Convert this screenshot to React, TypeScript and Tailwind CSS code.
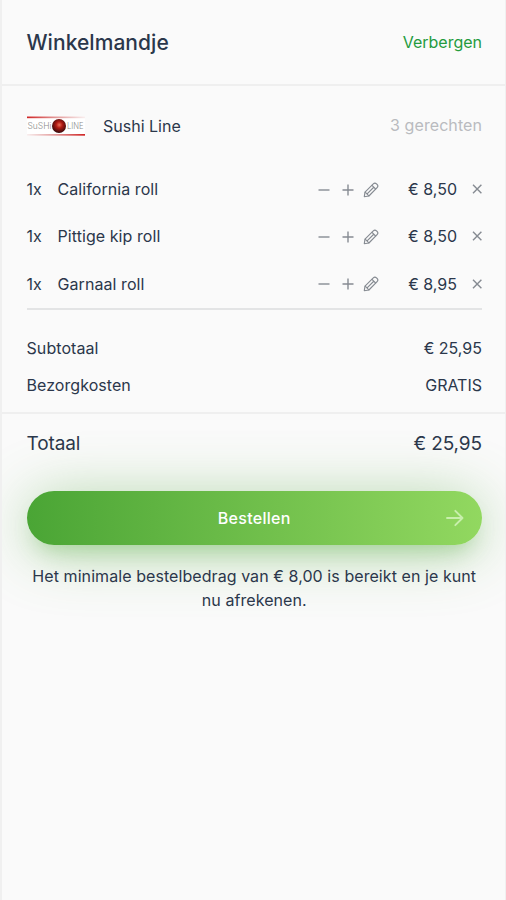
import React from "react";

const items = [
    { name: "California roll", price: "€ 8,50" },
    { name: "Pittige kip roll", price: "€ 8,50" },
    { name: "Garnaal roll", price: "€ 8,95" },
];

function PencilIcon() {
    return (
        <svg className="w-4 h-4" viewBox="0 0 16 16" fill="none" stroke="currentColor" strokeWidth="1.15" strokeLinejoin="round" strokeLinecap="round">
            <path d="M1.300 14.700l.7-4.600L10.300 1.900a2.300 2.300 0 0 1 3.200 0l.6.6a2.300 2.300 0 0 1 0 3.200L5.900 14z" />
            <path d="M2.200 10.200l3.600 3.600M9 3.400l3.600 3.600M4.600 11.400l5.900-5.900" />
        </svg>
    );
}

function RestaurantLogo() {
    return (
        <svg className="w-[58px] h-5" viewBox="0 0 58 20">
            <defs>
                <linearGradient id="lineTop" x1="0" x2="1">
                    <stop offset="0" stopColor="#cf2525" />
                    <stop offset="0.5" stopColor="#e29999" />
                    <stop offset="1" stopColor="#f8eeee" />
                </linearGradient>
                <linearGradient id="lineBottom" x1="0" x2="1">
                    <stop offset="0" stopColor="#f8eeee" />
                    <stop offset="0.5" stopColor="#e29999" />
                    <stop offset="1" stopColor="#cf2525" />
                </linearGradient>
                <radialGradient id="ball" cx="0.52" cy="0.42" r="0.55">
                    <stop offset="0" stopColor="#e8705a" />
                    <stop offset="0.4" stopColor="#b31a14" />
                    <stop offset="1" stopColor="#3d0a0c" />
                </radialGradient>
            </defs>
            <rect width="58" height="20" fill="#fff" />
            <rect y="0.5" width="58" height="1.7" fill="url(#lineTop)" />
            <rect y="18" width="58" height="1.7" fill="url(#lineBottom)" />
            <text x="0.5" y="13" textLength="24" lengthAdjust="spacingAndGlyphs" fontSize="8.5" fill="#8c8c8c" fontFamily="Inter, sans-serif" fontWeight="300">SuSHi</text>
            <text x="40" y="13" textLength="16.5" lengthAdjust="spacingAndGlyphs" fontSize="8.5" fill="#8c8c8c" fontFamily="Inter, sans-serif" fontWeight="300">LINE</text>
            <circle cx="32" cy="10" r="7" fill="url(#ball)" />
        </svg>
    );
}

export default function App() {
    return (
        <div className="w-full h-[900px] overflow-hidden bg-[#fafafa] border-l-2 border-r border-[#f0f0f0] font-['Inter',sans-serif] text-base leading-6 text-[#2b374b]">
            <header className="flex h-[86px] items-center justify-between border-b-2 border-[#efefef] pl-[24.5px] pr-[23px]">
                <h1 className="pt-px text-[21px] font-medium tracking-[0.05px]">Winkelmandje</h1>
                <button className="text-[#249b3e]">Verbergen</button>
            </header>

            <section className="pl-[24.5px] pr-[23px]">
                <div className="flex h-[79.5px] items-center justify-between">
                    <div className="flex items-center gap-[18.5px]">
                        <RestaurantLogo />
                        <span>Sushi Line</span>
                    </div>
                    <span className="text-[#b9bbbf] tracking-[0.08px] pb-px">3 gerechten</span>
                </div>

                <ul className="border-b-2 border-[#e3e4e5] pb-px">
                    {items.map((item) => (
                        <li key={item.name} className="flex h-[47.3px] items-center">
                            <span className="w-[31px]">1x</span>
                            <span className="flex-1 tracking-[0.07px]">{item.name}</span>
                            <div className="flex items-center pt-px text-[#868b92]">
                                <svg className="w-3 h-3 mr-3" viewBox="0 0 12 12" stroke="currentColor" strokeWidth="1.4">
                                    <path d="M0.5 6h11" />
                                </svg>
                                <svg className="w-3 h-3 mr-[9.5px]" viewBox="0 0 12 12" stroke="currentColor" strokeWidth="1.4">
                                    <path d="M0.5 6h11M6 0.5v11" />
                                </svg>
                                <PencilIcon />
                            </div>
                            <span className="w-[78px] text-right">{item.price}</span>
                            <svg className="w-2.5 h-2.5 ml-[15px] text-[#868b92]" viewBox="0 0 10 10" stroke="currentColor" strokeWidth="1.4">
                                <path d="M1 0.800l8.400 8.400M9.400 0.800L1 9.200" />
                            </svg>
                        </li>
                    ))}
                </ul>

                <div className="flex items-center justify-between pt-[25.6px]">
                    <span className="tracking-[0.08px]">Subtotaal</span>
                    <span>€ 25,95</span>
                </div>
                <div className="flex items-center justify-between pt-[13px] pb-[15px]">
                    <span className="tracking-[0.06px]">Bezorgkosten</span>
                    <span>GRATIS</span>
                </div>
            </section>

            <section className="border-t-2 border-[#efefef] pl-[24.5px] pr-[23px]">
                <div className="flex h-[60px] items-center justify-between text-[19px]">
                    <span className="tracking-[-0.1px]">Totaal</span>
                    <span className="tracking-[-0.1px]">€ 25,95</span>
                </div>
                <button className="mt-[17px] flex h-[54px] w-full items-center rounded-full bg-linear-to-r from-[#4aa535] to-[#92d860] px-[18px] font-medium text-white shadow-[0_14px_22px_-10px_rgba(74,165,53,0.35),0_6px_60px_rgba(74,165,53,0.42)]">
                    <span className="w-[18px]" />
                    <span className="flex-1 text-center tracking-[0.3px]">Bestellen</span>
                    <svg className="w-[18px] h-[18px] text-[#c8efad]" viewBox="0 0 18 18" fill="none" stroke="currentColor" strokeWidth="1.9" strokeLinecap="round" strokeLinejoin="round">
                        <path d="M1 9h15.500M9.300 1.800L16.500 9l-7.200 7.200" />
                    </svg>
                </button>
                <p className="mt-5 text-center leading-[23.700px] tracking-[0.07px]">
                    Het minimale bestelbedrag van € 8,00 is bereikt en je kunt nu afrekenen.
                </p>
            </section>
        </div>
    );
}
